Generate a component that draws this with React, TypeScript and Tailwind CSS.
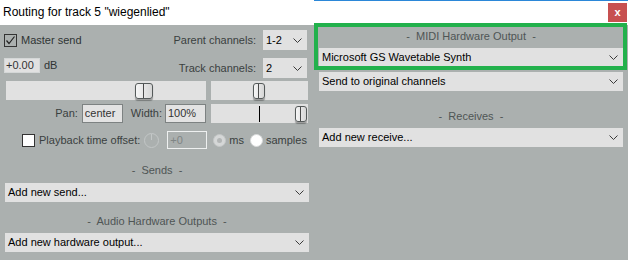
import React from 'react';

function Chevron() {
	return (
		<svg width="9" height="5" viewBox="0 0 9 5" className="shrink-0">
			<polyline points="0.5,0.5 4.5,4.5 8.5,0.5" fill="none" stroke="#3a3a3a" strokeWidth="1" />
		</svg>
	);
}

function Select({ label, className }: { label: string; className: string }) {
	return (
		<div className={`h-[19px] bg-[#e1e1e1] flex items-center justify-between pl-[3px] pr-[5px] text-black ${className}`}>
			<span>{label}</span>
			<Chevron />
		</div>
	);
}

function Header({ text, className }: { text: string; className: string }) {
	return (
		<div className={`h-[14px] flex items-center justify-center whitespace-pre text-[#4f5555] ${className}`}>
			{text}
		</div>
	);
}

function Thumb({ className }: { className: string }) {
	return (
		<div className={`absolute top-[2px] h-[16px] rounded-[3px] border border-[#555a5a] bg-gradient-to-r from-[#f6f6f6] to-[#d6d6d6] shadow-[0_2px_1px_rgba(0,0,0,0.3)] flex ${className}`}>
			<div className="w-1/2 border-r border-[#4a4a4a]" />
		</div>
	);
}

function LeftColumn() {
	return (
		<div className="w-[313px] flex flex-col text-[#2f3434]">
			<div className="mt-[5px] h-[20px] flex items-center justify-between pl-[4px] pr-[6px]">
				<div className="flex items-center">
					<div className="w-[13px] h-[13px] border border-[#333] flex items-center justify-center">
						<svg width="11" height="11" viewBox="0 0 11 11">
							<polyline points="1.5,5.5 4,8.5 9.5,1.5" fill="none" stroke="#222" strokeWidth="1.2" />
						</svg>
					</div>
					<span className="ml-[4px]">Master send</span>
				</div>
				<div className="flex items-center">
					<span className="mr-[7px] text-[#3a4040]">Parent channels:</span>
					<Select label="1-2" className="w-[44px] h-[20px]" />
				</div>
			</div>

			<div className="mt-[7px] h-[21px] flex items-start justify-between pl-[4px] pr-[6px]">
				<div className="flex items-center">
					<div className="w-[36px] h-[15px] border border-[#d4d7d7] bg-[#e1e1e1] flex items-center pl-[1px] text-[#333]">+0.00</div>
					<span className="ml-[4px]">dB</span>
				</div>
				<div className="flex items-center mt-[1px]">
					<span className="mr-[7px] text-[#3a4040]">Track channels:</span>
					<Select label="2" className="w-[44px] h-[20px]" />
				</div>
			</div>

			<div className="mt-[3px] h-[19px] flex">
				<div className="relative ml-[6px] w-[200px] h-[19px] bg-[#e1e1e1]">
					<Thumb className="left-[129px] w-[18px]" />
				</div>
				<div className="relative ml-[5px] w-[97px] h-[19px] bg-[#e1e1e1]">
					<Thumb className="left-[42px] w-[12px]" />
				</div>
			</div>

			<div className="mt-[4px] h-[19px] flex">
				<div className="ml-[6px] w-[200px] flex items-center justify-end">
					<span className="mr-[4px] text-[#3a4040]">Pan:</span>
					<div className="w-[41px] h-[19px] border border-[#7d8282] bg-[#e3e3e3] flex items-center pl-[2px] text-[#333]">center</div>
					<span className="ml-[8px] mr-[3px] text-[#3a4040]">Width:</span>
					<div className="w-[41px] h-[19px] border border-[#7d8282] bg-[#e3e3e3] flex items-center pl-[2px] text-[#333]">100%</div>
				</div>
				<div className="relative ml-[5px] w-[97px] h-[19px] bg-[#e1e1e1]">
					<div className="absolute left-[48px] top-[2px] w-px h-[16px] bg-black" />
					<Thumb className="left-[84px] w-[12px]" />
				</div>
			</div>

			<div className="mt-[8px] h-[18px] flex items-center">
				<div className="ml-[22px] w-[13px] h-[13px] border border-[#333] bg-white shrink-0" />
				<span className="ml-[4px] whitespace-nowrap text-[#3a4040]">Playback time offset:</span>
				<div className="ml-[4px] w-[15px] h-[15px] shrink-0 rounded-full border border-[#c3c7c7] flex justify-center">
					<div className="w-px h-[6px] bg-[#c3c7c7]" />
				</div>
				<div className="ml-[8px] w-[40px] h-[18px] shrink-0 border border-[#eef0f0] flex items-center pl-[2px] text-[#7f8585]">+0</div>
				<div className="ml-[6px] w-[13px] h-[13px] shrink-0 rounded-full bg-[#d5d7d7] border border-[#c4c7c7] flex items-center justify-center">
					<div className="w-[5px] h-[5px] rounded-full bg-[#b3b6b6]" />
				</div>
				<span className="ml-[3px] text-[#3a4040]">ms</span>
				<div className="ml-[6px] w-[13px] h-[13px] shrink-0 rounded-full bg-white border border-[#d8dada]" />
				<span className="ml-[3px] text-[#3a4040]">samples</span>
			</div>

			<Header text="-  Sends  -" className="mt-[14px] ml-[5px] w-[304px]" />
			<Select label="Add new send..." className="mt-[6px] ml-[5px] w-[304px]" />
			<Header text="-  Audio Hardware Outputs  -" className="mt-[12px] ml-[5px] w-[304px]" />
			<Select label="Add new hardware output..." className="mt-[5px] ml-[5px] w-[304px]" />
		</div>
	);
}

function RightColumn() {
	return (
		<div className="flex-1 flex flex-col">
			<Header text="-  MIDI Hardware Output  -" className="mt-[4px] ml-[6px] w-[304px]" />
			<Select label="Microsoft GS Wavetable Synth" className="mt-[5px] ml-[6px] w-[304px]" />
			<Select label="Send to original channels" className="mt-[5px] ml-[6px] w-[304px]" />
			<Header text="-  Receives  -" className="mt-[18px] ml-[6px] w-[304px]" />
			<Select label="Add new receive..." className="mt-[5px] ml-[6px] w-[304px]" />
		</div>
	);
}

export default function App() {
	return (
		<div className="relative w-[628px] h-[260px] overflow-hidden bg-[#abb0af] font-['Liberation_Sans',Arial,sans-serif] text-[11px]">
			<div className="relative h-[25px] bg-white flex items-start justify-between">
				<div className="absolute top-0 left-[314px] right-0 h-px bg-[#2b87d8]" />
				<span className="ml-[3px] mt-[5px] text-[12px] leading-[14px] text-black">Routing for track 5 "wiegenlied"</span>
				<div className="mt-[3px] mr-[1px] w-[19px] h-[19px] bg-[#c75050] flex items-center justify-center text-white font-bold text-[11px] leading-none">x</div>
			</div>
			<div className="flex">
				<LeftColumn />
				<RightColumn />
			</div>
			<div className="absolute left-[314px] top-[23px] w-[313px] h-[47px] border-4 border-[#22b14c]" />
		</div>
	);
}
